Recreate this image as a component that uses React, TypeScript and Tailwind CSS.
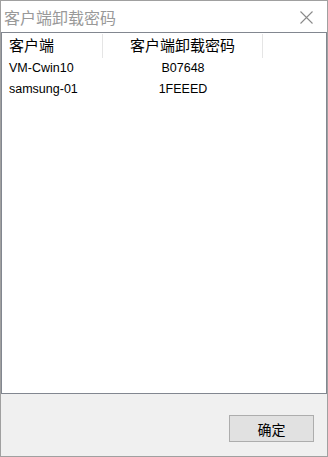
const rows = [
  { name: "VM-Cwin10", code: "B07648" },
  { name: "samsung-01", code: "1FEEED" },
];

const cjk = { fontFamily: '"Noto Sans CJK SC", "Liberation Sans", sans-serif' };
const latin = { fontFamily: '"Liberation Sans", "Noto Sans CJK SC", sans-serif' };

export default function App() {
  return (
    <div className="w-[328px] h-[457px] bg-[#f0f0f0] border border-[#a0a0a0] flex flex-col">
      {/* title bar */}
      <div className="h-[31px] bg-white flex items-center justify-between pl-[3px] pr-[14px]">
        <span className="text-[16px] leading-none text-[#999999]" style={cjk}>
          客户端卸载密码
        </span>
        <svg width="13" height="13" viewBox="0 0 13 13" className="mt-[2px]">
          <path d="M0.5 0.5 L12.5 12.5 M12.5 0.5 L0.5 12.5" stroke="#8a8a8a" strokeWidth="1.1" />
        </svg>
      </div>

      {/* list view */}
      <div className="flex-1 bg-white border border-[#828790]">
        <div className="flex h-[25px] items-center text-[15px] text-black" style={cjk}>
          <div className="w-[101px] pl-[7px] border-r border-[#e5e5e5] h-[24px] flex items-center">客户端</div>
          <div className="w-[160px] text-center border-r border-[#e5e5e5] h-[24px] flex items-center justify-center">
            客户端卸载密码
          </div>
        </div>
        {rows.map((r) => (
          <div key={r.name} className="flex h-[21px] items-center text-[12.5px] text-black" style={latin}>
            <div className="w-[101px] pl-[7px]">{r.name}</div>
            <div className="w-[160px] text-center">{r.code}</div>
          </div>
        ))}
      </div>

      {/* footer */}
      <div className="h-[62px] flex items-start justify-end pt-[21px] pr-[13px]">
        <button
          className="w-[85px] h-[27px] bg-[#e1e1e1] border border-[#adadad] text-[14px] text-black leading-none"
          style={cjk}
        >
          确定
        </button>
      </div>
    </div>
  );
}
